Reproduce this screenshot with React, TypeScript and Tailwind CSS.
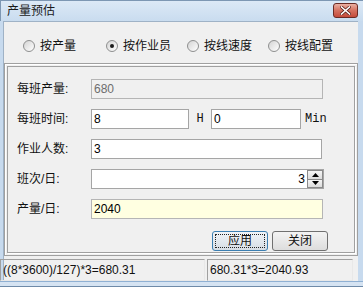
import React from "react";

const cjk = { fontFamily: '"Liberation Sans", "Noto Sans CJK SC", sans-serif' };
const mono = { fontFamily: '"Liberation Mono", "DejaVu Sans Mono", monospace' };

function Radio({ checked, label }: { checked?: boolean; label: string }) {
  return (
    <div className="flex items-center gap-[5px]">
      <div className="w-[12px] h-[12px] rounded-full border border-[#8e8f8f] bg-gradient-to-br from-[#d4d4d4] to-[#ffffff] flex items-center justify-center">
        {checked && <div className="w-[4px] h-[4px] rounded-full bg-[#1b1b1b]" />}
      </div>
      <span className="text-[12px] text-[#111] leading-none">{label}</span>
    </div>
  );
}

function Label({ children }: { children: React.ReactNode }) {
  return <div className="w-[83px] text-[12px] text-[#111] pl-[9px] leading-none">{children}</div>;
}

function Input({ value, w, bg = "bg-white", text = "text-[#000]", border = "border-[#a5a5a5]" }: { value: string; w: string; bg?: string; text?: string; border?: string }) {
  return (
    <div className={`${w} h-[20px] border ${border} ${bg} ${text} text-[12px] px-[2px] flex items-center leading-none`}>
      {value}
    </div>
  );
}

export default function App() {
  return (
    <div className="w-[363px] h-[287px] bg-[#c7daee] flex flex-col overflow-hidden" style={cjk}>
      {/* Title bar */}
      <div className="h-[21px] flex items-center justify-between pl-[6px] pr-[5px] bg-gradient-to-b from-[#dce9f6] to-[#c9dcef] border-t border-l border-[#7d97b3]">
        <span className="text-[12px] text-[#1a1a1a] leading-none">产量预估</span>
        <div className="w-[25px] h-[15px] mt-[-1px] rounded-[3px] border border-[#6b2b24] bg-gradient-to-b from-[#eab0a3] via-[#d4705f] to-[#c44a3a] flex items-center justify-center">
          <svg width="11" height="9" viewBox="0 0 11 9">
            <path d="M1.5 1 L9.5 8 M9.5 1 L1.5 8" stroke="#5a2019" strokeWidth="3" strokeLinecap="square" />
            <path d="M1.5 1 L9.5 8 M9.5 1 L1.5 8" stroke="#ffffff" strokeWidth="1.6" strokeLinecap="square" />
          </svg>
        </div>
      </div>
      {/* Body */}
      <div className="h-[260px] ml-[3px] mr-[5px] bg-[#f0f0f0] border-t border-l border-[#9fb2c6] flex flex-col">
        {/* Radio row */}
        <div className="h-[41px] flex items-center pl-[19px] pt-[6px]">
          <div className="w-[83px]"><Radio label="按产量" /></div>
          <div className="w-[81px]"><Radio checked label="按作业员" /></div>
          <div className="w-[81px]"><Radio label="按线速度" /></div>
          <Radio label="按线配置" />
        </div>
        {/* Group */}
        <div className="h-[193px] border border-[#a0a0a0] shadow-[inset_1px_1px_0_#ffffff] p-[2px]">
          <div className="h-full border border-[#a0a0a0] shadow-[1px_1px_0_#ffffff] flex flex-col pt-[12px] gap-[10px]">
            <div className="flex items-center">
              <Label>每班产量:</Label>
              <Input value="680" w="w-[232px]" bg="bg-[#f0f0f0]" text="text-[#6d6d6d]" border="border-[#b5b5b5]" />
            </div>
            <div className="flex items-center">
              <Label>每班时间:</Label>
              <Input value="8" w="w-[98px]" />
              <span className="w-[22px] text-center text-[12px] text-[#111]" style={mono}>H</span>
              <Input value="0" w="w-[90px]" />
              <span className="pl-[4px] text-[12px] text-[#111]" style={mono}>Min</span>
            </div>
            <div className="flex items-center">
              <Label>作业人数:</Label>
              <Input value="3" w="w-[231px]" />
            </div>
            <div className="flex items-center">
              <Label>班次/日:</Label>
              <div className="w-[233px] h-[20px] border border-[#a5a5a5] bg-white flex items-center justify-end">
                <span className="text-[12px] pr-[2px] leading-none">3</span>
                <div className="w-[16px] h-[18px] flex flex-col">
                  <div className="flex-1 border border-[#8a8a8a] bg-gradient-to-b from-[#f6f6f6] to-[#dcdcdc] flex items-center justify-center">
                    <svg width="7" height="4" viewBox="0 0 7 4"><path d="M0 4 L3.5 0 L7 4 Z" fill="#000" /></svg>
                  </div>
                  <div className="flex-1 border border-t-0 border-[#8a8a8a] bg-gradient-to-b from-[#f6f6f6] to-[#dcdcdc] flex items-center justify-center">
                    <svg width="7" height="4" viewBox="0 0 7 4"><path d="M0 0 L3.5 4 L7 0 Z" fill="#000" /></svg>
                  </div>
                </div>
              </div>
            </div>
            <div className="flex items-center">
              <Label>产量/日:</Label>
              <Input value="2040" w="w-[232px]" bg="bg-[#ffffe1]" border="border-[#b5b5b5]" />
            </div>
            <div className="flex justify-end pr-[26px] gap-[4px] mt-[2px]">
              <div className="w-[56px] h-[20px] rounded-[3px] border border-[#3c7fb1] bg-gradient-to-b from-[#f0f4f8] to-[#d6dde4] p-[2px]">
                <div className="w-full h-full border border-dotted border-[#222] flex items-center justify-center text-[12px] leading-none text-[#111]">应用</div>
              </div>
              <div className="w-[56px] h-[20px] rounded-[3px] border border-[#707070] bg-gradient-to-b from-[#f3f3f3] to-[#dddddd] flex items-center justify-center text-[12px] leading-none text-[#111]">关闭</div>
            </div>
          </div>
        </div>
        {/* Status bar */}
        <div className="h-[22px] mt-[3px] -ml-[4px] flex items-stretch">
          <div className="w-[205px] border-t border-l border-[#a0a0a0] border-r border-b border-r-[#e8e8e8] border-b-[#e8e8e8] text-[12px] flex items-center pl-[2px] text-[#111] leading-none">((8*3600)/127)*3=680.31</div>
          <div className="w-[2px]" />
          <div className="w-[146px] border-t border-l border-[#a0a0a0] border-r border-b border-r-[#e8e8e8] border-b-[#e8e8e8] text-[12px] flex items-center pl-[2px] text-[#111] leading-none">680.31*3=2040.93</div>
        </div>
      </div>
      <div className="flex-1 border-t border-[#8fb0d3] border-b border-b-[#6e8aa8] bg-[#d5e3f2]" />
    </div>
  );
}
